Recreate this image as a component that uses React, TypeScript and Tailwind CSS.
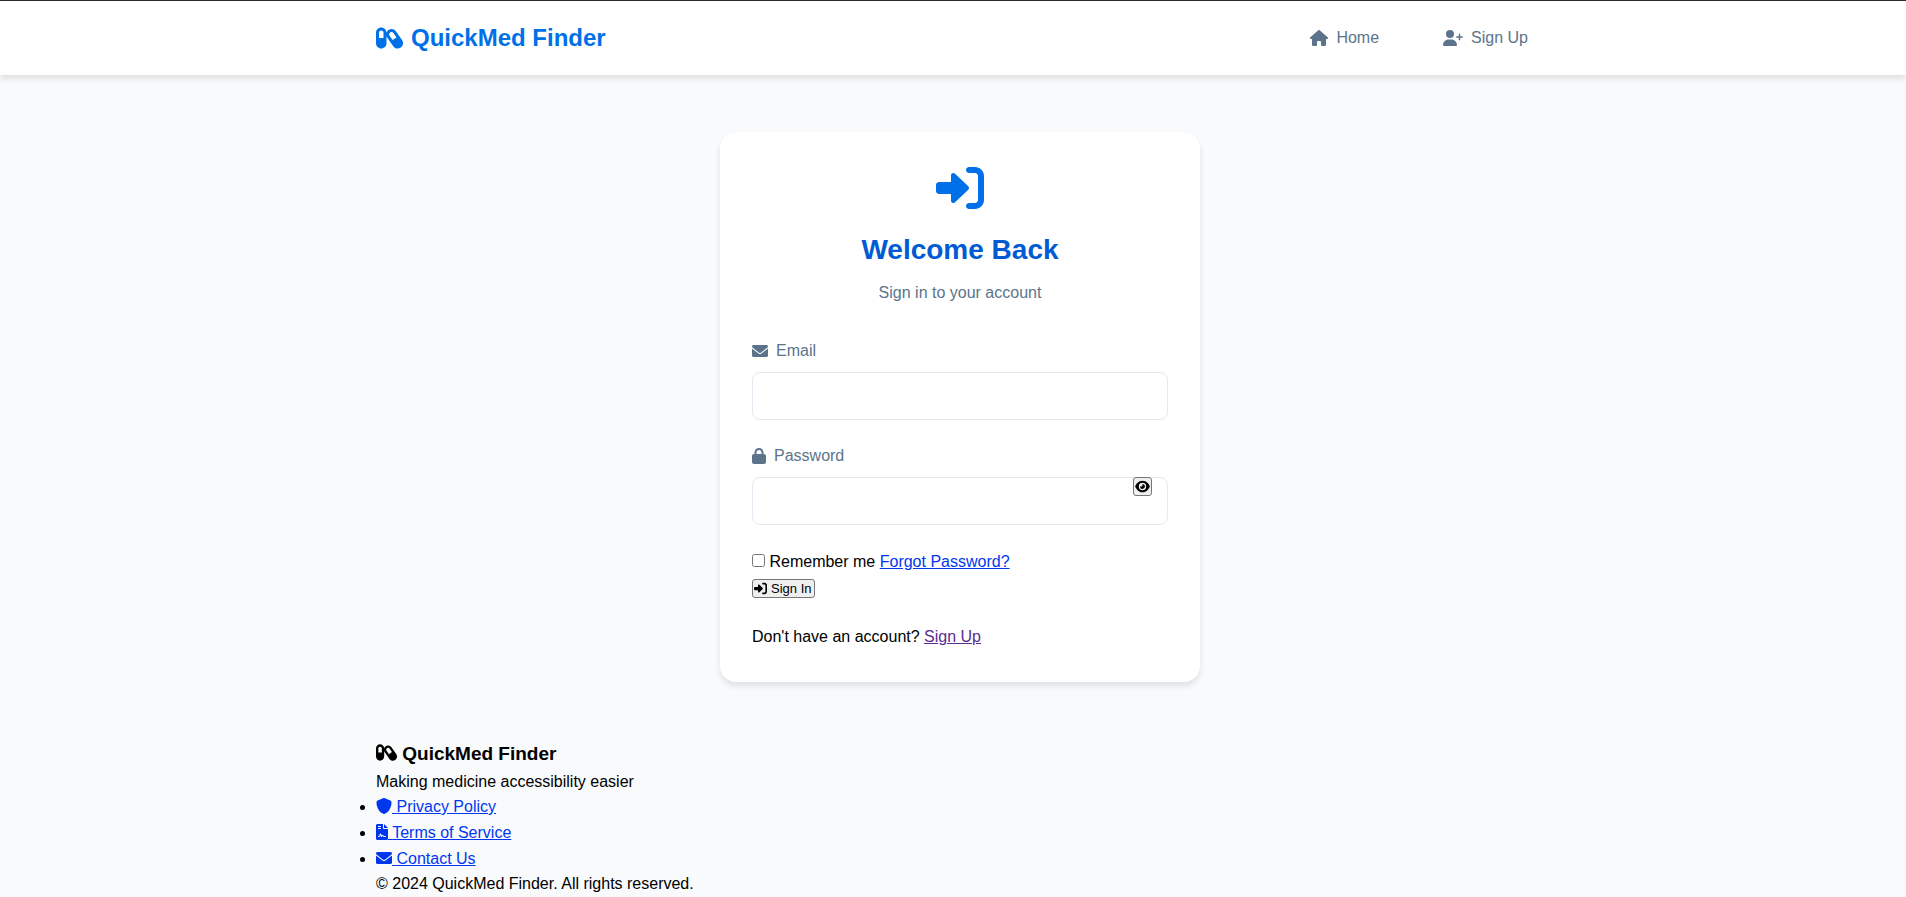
import { useState } from "react";
import { FaEye, FaHouse, FaLock, FaShield, FaUserPlus } from "react-icons/fa6";

type IconProps = { className?: string };

function CapsulesIcon({ className }: IconProps) {
  return (
    <svg viewBox="0 0 576 512" fill="currentColor" aria-hidden="true" className={className}>
      <path d="M555.3 300.1L424.3 112.8C401.9 81 366.4 64 330.4 64c-22.63 0-45.5 6.75-65.5 20.75C245.2 98.5 231.2 117.5 223.4 138.5C220.5 79.25 171.1 32 112 32C50.12 32 0 82.12 0 144v224c0 61.88 50.12 112 112 112s112-50.13 112-112V218.9C227.2 227.5 231.2 236 236.7 243.9l131.3 187.4C390.3 463 425.8 480 461.8 480c22.75 0 45.5-6.75 65.5-20.75C579 423.1 591.5 351.8 555.3 300.1zM160 256H64V144c0-26.5 21.5-48 48-48s48 21.5 48 48V256zM354.8 300.9l-65.5-93.63c-7.75-11-10.75-24.5-8.375-37.63c2.375-13.25 9.75-24.87 20.75-32.5C310.1 131.1 320.1 128 330.4 128c16.5 0 31.88 8 41.38 21.5l65.5 93.75L354.8 300.9z" />
    </svg>
  );
}

function EnvelopeIcon({ className }: IconProps) {
  return (
    <svg viewBox="0 0 512 512" fill="currentColor" aria-hidden="true" className={className}>
      <path d="M256 352c-16.53 0-33.06-5.422-47.16-16.41L0 173.2V400C0 426.5 21.49 448 48 448h416c26.51 0 48-21.49 48-48V173.2l-208.8 162.5C289.1 346.6 272.5 352 256 352zM16.29 145.3l212.2 165.1c16.19 12.6 38.87 12.6 55.06 0l212.2-165.1C505.1 137.3 512 125 512 112C512 85.49 490.5 64 464 64h-416C21.49 64 0 85.49 0 112C0 125 6.01 137.3 16.29 145.3z" />
    </svg>
  );
}

function SignInIcon({ className }: IconProps) {
  return (
    <svg viewBox="0 0 512 512" fill="currentColor" aria-hidden="true" className={className}>
      <path d="M344.7 238.5l-144.1-136C193.7 95.97 183.4 94.17 174.6 97.95C165.8 101.8 160.1 110.4 160.1 120V192H32.02C14.33 192 0 206.3 0 224v64c0 17.68 14.33 32 32.02 32h128.1v72c0 9.578 5.707 18.25 14.51 22.05c8.803 3.781 19.03 1.984 26-4.594l144.1-136C354.3 264.8 354.3 247.2 344.7 238.5z" />
      <path d="M416 32h-64c-17.67 0-32 14.33-32 32s14.33 32 32 32h64c17.67 0 32 14.33 32 32v256c0 17.67-14.33 32-32 32h-64c-17.67 0-32 14.33-32 32s14.33 32 32 32h64c53.02 0 96-42.98 96-96V128C512 74.98 469 32 416 32z" />
    </svg>
  );
}

function ContractIcon({ className }: IconProps) {
  return (
    <svg viewBox="0 0 384 512" fill="currentColor" aria-hidden="true" className={className}>
      <path d="M256 0v128h128L256 0z" />
      <path
        fillRule="evenodd"
        d="M224 128V0H48C21.49 0 0 21.49 0 48v416C0 490.5 21.49 512 48 512h288c26.51 0 48-21.49 48-48V160H256C238.3 160 224 145.7 224 128zM64 72C64 67.63 67.63 64 72 64h80C156.4 64 160 67.63 160 72v16C160 92.38 156.4 96 152 96h-80C67.63 96 64 92.38 64 88V72zM64 136C64 131.6 67.63 128 72 128h80C156.4 128 160 131.6 160 136v16C160 156.4 156.4 160 152 160h-80C67.63 160 64 156.4 64 152V136zM304 384c8.875 0 16 7.125 16 16S312.9 416 304 416h-47.25c-16.38 0-31.25-9.125-38.63-23.88c-2.875-5.875-8-6.5-10.12-6.5s-7.25.625-10 6.125l-7.75 15.38C187.6 412.6 181.1 416 176 416H174.9c-6.5-.5-12-4.75-14-11L144 354.6L133.4 386.5C127.5 404.1 111 416 92.38 416H80C71.13 416 64 408.9 64 400S71.13 384 80 384h12.38c4.875 0 9.125-3.125 10.62-7.625l18.25-54.63C124.5 311.9 133.6 305.3 144 305.3s19.5 6.625 22.75 16.5l13.88 41.63c19.75-16.25 54.13-9.75 66 14.12c2 4 6 6.5 10.12 6.5H304z"
      />
    </svg>
  );
}

const legalLinks = [
  { label: "Privacy Policy", icon: FaShield, width: "w-4" },
  { label: "Terms of Service", icon: ContractIcon, width: "w-3" },
  { label: "Contact Us", icon: EnvelopeIcon, width: "w-4" },
];

const field =
  "block h-12 w-full rounded-lg border border-[#e2e8f0] bg-white px-4 text-base outline-none focus:border-[#0070e8]";
const fieldLabel = "mb-2 flex items-center gap-2 text-[#5b748b]";

function SiteHeader() {
  return (
    <header className="border-t border-[#2b2a33] bg-white pl-[14px] shadow-[0_4px_6px_rgba(0,0,0,0.1)]">
      <nav className="mx-auto flex h-[74px] max-w-[1200px] items-center justify-between px-4">
        <a href="#" className="flex items-center gap-2 text-2xl font-bold text-[#0070e8]">
          <CapsulesIcon className="h-6 w-[27px]" />
          QuickMed Finder
        </a>
        <ul className="flex gap-8 text-[#5b748b]">
          <li>
            <a href="#home" className="flex items-center gap-2 px-4 py-2">
              <FaHouse className="h-4 w-[18px]" />
              Home
            </a>
          </li>
          <li>
            <a href="#signup" className="flex items-center gap-2 px-4 py-2">
              <FaUserPlus className="h-4 w-5" />
              Sign Up
            </a>
          </li>
        </ul>
      </nav>
    </header>
  );
}

function LoginCard() {
  const [visible, setVisible] = useState(false);
  return (
    <section className="w-full max-w-[480px] rounded-2xl bg-white p-8 shadow-[0_4px_6px_rgba(0,0,0,0.1)]">
      <div className="mb-8 flex flex-col items-center text-center">
        <SignInIcon className="mb-4 h-12 w-12 text-[#0070e8]" />
        <h1 className="mb-2 text-[28px] leading-[44px] font-bold text-[#005bd4]">Welcome Back</h1>
        <p className="text-[#5b748b]">Sign in to your account</p>
      </div>
      <form onSubmit={(e) => e.preventDefault()}>
        <div className="mb-[23px]">
          <label htmlFor="email" className={fieldLabel}>
            <EnvelopeIcon className="h-4 w-4" />
            Email
          </label>
          <input id="email" type="email" className={field} />
        </div>
        <div className="mb-[23px]">
          <label htmlFor="password" className={fieldLabel}>
            <FaLock className="h-4 w-[14px]" />
            Password
          </label>
          <div className="relative">
            <input id="password" type={visible ? "text" : "password"} className={field} />
            <button
              type="button"
              aria-label="Show password"
              onClick={() => setVisible(!visible)}
              className="absolute top-0 right-4 flex h-[19px] w-[19px] items-center justify-center rounded-[3px] border border-[#767676] bg-[#efefef]"
            >
              <FaEye className="h-[13px] w-[15px] shrink-0" />
            </button>
          </div>
        </div>
        <div className="leading-7">
          <input id="remember" type="checkbox" className="h-[13px] w-[13px]" />{" "}
          <label htmlFor="remember">Remember me</label>{" "}
          <a href="#forgot" className="text-[#0037ee] underline">
            Forgot Password?
          </a>
        </div>
        <button
          type="submit"
          className="mt-[3px] flex h-[19px] items-center gap-1 rounded-[3px] border border-[#767676] bg-[#efefef] pr-[3px] pl-px text-[13px]"
        >
          <SignInIcon className="h-[13px] w-[13px]" />
          Sign In
        </button>
      </form>
      <p className="mt-[26px]">
        Don't have an account?{" "}
        <a href="#signup" className="text-[#5a2d90] underline">
          Sign Up
        </a>
      </p>
    </section>
  );
}

function SiteFooter() {
  return (
    <footer className="pl-[14px]">
      <div className="mx-auto max-w-[1200px] px-4">
        <h3 className="text-[19px] leading-[30px] font-bold">
          <CapsulesIcon className="inline-block h-[19px] w-[21px] align-[-0.125em]" /> QuickMed Finder
        </h3>
        <p className="leading-[25px]">Making medicine accessibility easier</p>
        <ul className="list-disc">
          {legalLinks.map(({ label, icon: Icon, width }) => (
            <li key={label}>
              <a href="#legal" className="text-[#0037ee] underline">
                <Icon className={`inline-block h-4 align-[-0.125em] ${width}`} /> {label}
              </a>
            </li>
          ))}
        </ul>
        <p className="leading-6">© 2024 QuickMed Finder. All rights reserved.</p>
      </div>
    </footer>
  );
}

export default function App() {
  return (
    <div className="min-h-screen bg-[#f8fafc] font-['Liberation_Sans',Arial,sans-serif] text-base leading-[26px] text-black">
      <SiteHeader />
      <main className="flex justify-center py-[57px] pl-[14px]">
        <LoginCard />
      </main>
      <SiteFooter />
    </div>
  );
}
